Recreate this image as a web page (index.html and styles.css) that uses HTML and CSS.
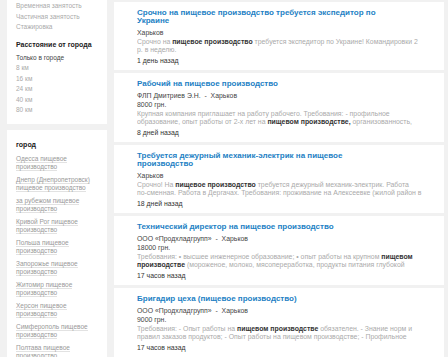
FILE: index.html
```html
<!DOCTYPE html>
<html lang="ru">
<head>
    <meta charset="UTF-8">
    <meta name="viewport" content="width=device-width, initial-scale=1.0">
    <title>Вакансии: пищевое производство - Харьков</title>
    <link rel="stylesheet" href="styles.css">
</head>
<body>
    <div class="page">
        <div class="sidebar">
            <div class="box box-top">
                <div class="filter">Временная занятость</div>
                <div class="filter">Частичная занятость</div>
                <div class="filter">Стажировка</div>
                <h3>Расстояние от города</h3>
                <div class="filter active">Только в городе</div>
                <div class="filter">8 км</div>
                <div class="filter">16 км</div>
                <div class="filter">24 км</div>
                <div class="filter">40 км</div>
                <div class="filter">80 км</div>
            </div>

            <div class="box">
                <h3>город</h3>
                <ul class="cities">
                    <li><a href="#">Одесса пищевое производство</a></li>
                    <li><a href="#">Днепр (Днепропетровск) пищевое производство</a></li>
                    <li><a href="#">за рубежом пищевое производство</a></li>
                    <li><a href="#">Кривой Рог пищевое производство</a></li>
                    <li><a href="#">Польша пищевое производство</a></li>
                    <li><a href="#">Запорожье пищевое производство</a></li>
                    <li><a href="#">Житомир пищевое производство</a></li>
                    <li><a href="#">Херсон пищевое производство</a></li>
                    <li><a href="#">Симферополь пищевое производство</a></li>
                    <li><a href="#">Полтава пищевое производство</a></li>
                </ul>
            </div>
        </div>

        <div class="results">
            <div class="job">
                <h2><a href="#">Срочно на пищевое производство требуется экспедитор по Украине</a></h2>
                <div class="meta">Харьков</div>
                <p class="desc">Срочно на <b>пищевое производство</b> требуется экспедитор по Украине! Командировки 2 р. в неделю.</p>
                <div class="date">1 день назад</div>
            </div>

            <div class="job">
                <h2><a href="#">Рабочий на пищевое производство</a></h2>
                <div class="meta">ФЛП Дмитриев Э.Н. &nbsp;-&nbsp; Харьков</div>
                <div class="meta">8000 грн.</div>
                <p class="desc">Крупная компания приглашает на работу рабочего. Требования: - профильное образование, опыт работы от 2-х лет на <b>пищевом производстве,</b> организованность, ответственность.</p>
                <div class="date">8 дней назад</div>
            </div>

            <div class="job">
                <h2><a href="#">Требуется дежурный механик-электрик на пищевое производство</a></h2>
                <div class="meta">Харьков</div>
                <p class="desc">Срочно! На <b>пищевое производство</b> требуется дежурный механик-электрик. Работа <span class="nw">по-сменная.</span> Работа в Дергачах. Требования: проживание на Алексеевке (жилой район в Харькове).</p>
                <div class="date">18 дней назад</div>
            </div>

            <div class="job">
                <h2><a href="#">Технический директор на пищевое производство</a></h2>
                <div class="meta">ООО «Продхладгрупп» &nbsp;-&nbsp; Харьков</div>
                <div class="meta">18000 грн.</div>
                <p class="desc">Требования: • высшее инженерное образование; • опыт работы на крупном <b>пищевом производстве</b> (мороженое, молоко, мясопереработка, продукты питания глубокой заморозки).</p>
                <div class="date">17 часов назад</div>
            </div>

            <div class="job">
                <h2><a href="#">Бригадир цеха (пищевое производство)</a></h2>
                <div class="meta">ООО «Продхладгрупп» &nbsp;-&nbsp; Харьков</div>
                <div class="meta">9000 грн.</div>
                <p class="desc">Требования: - Опыт работы на <b>пищевом производстве</b> обязателен. - Знание норм и правил заказов продуктов; - Опыт работы на пищевом производстве; - Профильное образование.</p>
                <div class="date">17 часов назад</div>
            </div>
        </div>
    </div>
</body>
</html>
```

FILE: styles.css
```css
body {
    font-family: "Liberation Sans", Arial, sans-serif;
    color: #333;
    background-color: #f1f1f1;
    margin: 0;
}
a {
    text-decoration: none;
}
.page {
    display: flex;
    align-items: flex-start;
    gap: 7px;
    padding: 0 4px 0 7px;
}
.sidebar {
    width: 100px;
    flex-shrink: 0;
    display: flex;
    flex-direction: column;
    gap: 6px;
}
.box {
    background-color: #fff;
    padding: 10px 6px 6px 9px;
}
.box-top {
    padding-top: 1px;
    padding-bottom: 8px;
}
.box h3 {
    font-size: 7px;
    font-weight: bold;
    color: #222;
    margin: 0;
    line-height: 10px;
}
.filter {
    font-size: 6.5px;
    line-height: 10.5px;
    color: #aaa;
}
.box-top h3 {
    margin: 7px 0 3px;
}
.filter.active {
    color: #444;
}
.cities {
    list-style: none;
    margin: 5px 0 0;
    padding: 0;
}
.cities li {
    font-size: 6.5px;
    line-height: 8px;
    margin-bottom: 5px;
}
.cities a {
    color: #999;
    border-bottom: 1px solid #e2e2e2;
}
.results {
    flex: 1;
    display: flex;
    flex-direction: column;
    gap: 3px;
    padding-top: 2px;
}
.job {
    background-color: #fff;
    padding: 6.75px 20px 4.5px 23px;
}
.job h2 {
    font-size: 8px;
    line-height: 8.5px;
    margin: 0 0 2.5px;
    max-width: 246px;
}
.job h2 a {
    color: #237fc4;
}
.meta {
    font-size: 6.9px;
    line-height: 9.5px;
    color: #444;
}
.desc {
    font-size: 6.9px;
    line-height: 8px;
    max-height: 16px;
    overflow: hidden;
    color: #aaa;
    margin: 0.5px 0 1.7px;
}
.desc b {
    color: #333;
}
.nw {
    white-space: nowrap;
}
.date {
    font-size: 6.9px;
    line-height: 9.5px;
    color: #333;
}
```
